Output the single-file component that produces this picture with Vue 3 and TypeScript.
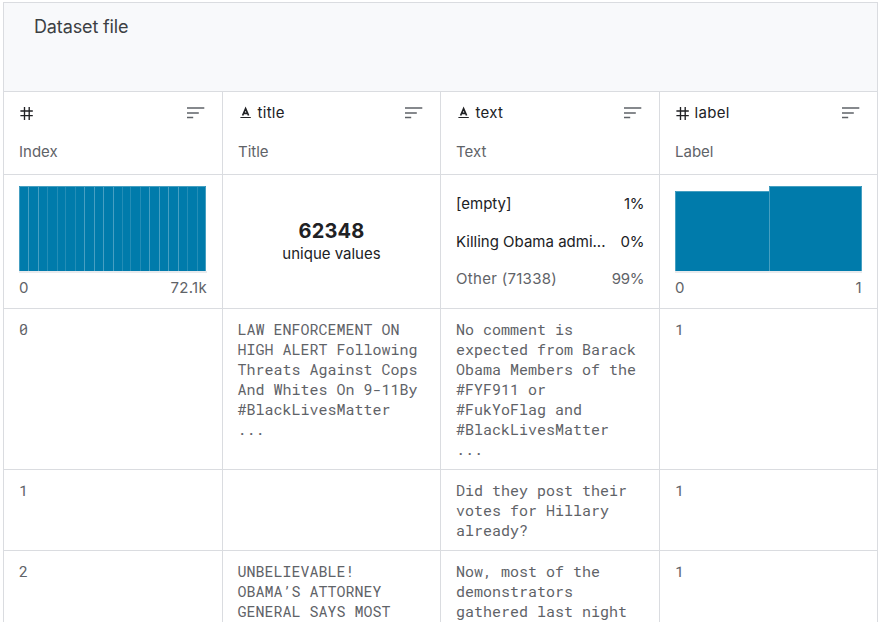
<script setup lang="ts">
type ColumnKind = 'number' | 'string'

interface Column {
  name: string
  kind: ColumnKind
  description: string
}

interface Share {
  label: string
  percent: string
  muted?: boolean
}

const columns: Column[] = [
  { name: '', kind: 'number', description: 'Index' },
  { name: 'title', kind: 'string', description: 'Title' },
  { name: 'text', kind: 'string', description: 'Text' },
  { name: 'label', kind: 'number', description: 'Label' },
]

const shares: Share[] = [
  { label: '[empty]', percent: '1%' },
  { label: 'Killing Obama admi...', percent: '0%' },
  { label: 'Other (71338)', percent: '99%', muted: true },
]

// Left edges of the bins, in chart pixels
const indexBins: number[] = [0, 9, 19, 28, 38, 46, 56, 65, 75, 84, 94, 103, 111, 121, 130, 140, 149, 159, 168, 178]
const strongEdges: number[] = [9, 19, 65, 75, 84, 94, 130, 140, 149, 159]

const rows: string[][] = [
  [
    '0',
    'LAW ENFORCEMENT ON\nHIGH ALERT Following\nThreats Against Cops\nAnd Whites On 9-11By\n#BlackLivesMatter\n...',
    'No comment is\nexpected from Barack\nObama Members of the\n#FYF911 or\n#FukYoFlag and\n#BlackLivesMatter\n...',
    '1',
  ],
  ['1', '', 'Did they post their\nvotes for Hillary\nalready?', '1'],
  [
    '2',
    'UNBELIEVABLE!\nOBAMA’S ATTORNEY\nGENERAL SAYS MOST',
    'Now, most of the\ndemonstrators\ngathered last night',
    '1',
  ],
]
</script>

<template>
  <main class="viewer">
    <header class="banner">Dataset file</header>

    <div class="grid-row heads">
      <section v-for="column in columns" :key="column.description" class="cell head">
        <div class="head-line">
          <svg v-if="column.kind === 'number'" class="kind" width="15" height="16" viewBox="0 0 15 16">
            <path d="M5.5 2V15M10.2 2V15M1.4 6H13.8M1.4 10.6H13.8" fill="none" stroke="#202124" stroke-width="1.35" />
          </svg>
          <svg v-else class="kind" width="15" height="16" viewBox="0 0 15 16">
            <path d="M4.6 10.5L7.6 3.6L10.6 10.5M5.7 8.3H9.5" fill="none" stroke="#202124" stroke-width="1.7" />
            <path d="M2.4 12.5H12.8" stroke="#202124" stroke-width="1" />
          </svg>
          <span class="name">{{ column.name }}</span>
          <svg class="sort" width="18" height="12" viewBox="0 0 18 12">
            <path d="M0 1H17.3M0 6H11.8M0 10.5H6.2" stroke="#5f6368" stroke-width="1.7" />
          </svg>
        </div>
        <p class="description">{{ column.description }}</p>
      </section>
    </div>

    <div class="grid-row summary">
      <section class="cell chart">
        <svg width="188" height="87" viewBox="0 0 188 87">
          <path d="M0 86H188" stroke="#e8eaed" stroke-width="2" />
          <rect width="187" height="85" fill="#007bab" />
          <path
            v-for="x in indexBins.slice(1)"
            :key="x"
            :d="`M${x + 0.5} 0V85`"
            stroke="#ffffff"
            :stroke-opacity="strongEdges.includes(x) ? 0.28 : 0.14"
          />
          <path d="M.5 85V.5H186.5V85" fill="none" stroke="#459fc1" />
        </svg>
        <div class="range"><span>0</span><span>72.1k</span></div>
      </section>
      <section class="cell unique">
        <strong>62348</strong>
        <span>unique values</span>
      </section>
      <section class="cell shares">
        <div v-for="share in shares" :key="share.label" class="share" :class="{ muted: share.muted }">
          <span>{{ share.label }}</span>
          <span class="percent">{{ share.percent }}</span>
        </div>
      </section>
      <section class="cell chart">
        <svg width="188" height="87" viewBox="0 0 188 87">
          <path d="M0 86H187" stroke="#e8eaed" stroke-width="2" />
          <path d="M0 85V5H94V0H187V85Z" fill="#007bab" />
          <path d="M.5 85V5.5H94.5M94.5 85V.5H186.5V85" fill="none" stroke="#459fc1" />
        </svg>
        <div class="range"><span>0</span><span>1</span></div>
      </section>
    </div>

    <div v-for="row in rows" :key="row[0]" class="grid-row">
      <div v-for="(value, i) in row" :key="i" class="cell value">{{ value }}</div>
    </div>
  </main>
</template>

<style>
body {
  background: #fff;
  overflow: hidden;
}
</style>

<style scoped>
.viewer {
  box-sizing: border-box;
  width: 875px;
  height: 620px;
  margin: 2px 0 0 3px;
  overflow: hidden;
  border-top: 1px solid #dadce0;
  border-left: 1px solid #dadce0;
  font-family: Inter, "Liberation Sans", sans-serif;
  font-size: 15px;
  line-height: 20px;
  color: #202124;
}

.banner {
  box-sizing: border-box;
  height: 89px;
  padding: 12px 30px;
  border-right: 1px solid #dadce0;
  border-bottom: 1px solid #dadce0;
  background: #f8f9fb;
  color: #3c4043;
  font-size: 18px;
  letter-spacing: -0.13px;
  line-height: 24px;
}

.grid-row {
  display: grid;
  grid-template-columns: 219px 218px 219px 218px;
}

.cell {
  box-sizing: border-box;
  min-width: 0;
  padding: 11px 15px 9px;
  border-right: 1px solid #dadce0;
  border-bottom: 1px solid #dadce0;
}

.heads {
  height: 83px;
}

.head-line {
  display: flex;
  align-items: center;
  height: 20px;
}

.kind {
  margin-right: 4.5px;
}

.name {
  font-weight: 400;
  letter-spacing: 0.3px;
}

.sort {
  margin-left: auto;
  margin-right: 2px;
}

.description {
  margin: 19px 0 0;
  color: #5f6368;
}

.summary {
  height: 134px;
}

.chart {
  padding-right: 14px;
}

.chart svg {
  display: block;
}

.range {
  display: flex;
  justify-content: space-between;
  margin-top: 5px;
  padding-right: 1px;
  color: #5f6368;
  letter-spacing: 0.3px;
}

.unique {
  display: flex;
  flex-direction: column;
  align-items: center;
  padding-top: 44px;
}

.unique strong {
  margin-bottom: 1px;
  font-size: 20px;
  font-weight: 700;
  letter-spacing: 0.2px;
  line-height: 24px;
}

.shares {
  display: flex;
  flex-direction: column;
  gap: 17.5px;
  padding-top: 19px;
}

.share {
  display: flex;
  justify-content: space-between;
  white-space: nowrap;
}

.percent {
  letter-spacing: -0.4px;
}

.muted {
  color: #5f6368;
  letter-spacing: 0.3px;
}

.value {
  padding: 10px 14px 10px 15px;
  color: #5f6368;
  font-family: "Roboto Mono", "DejaVu Sans Mono", monospace;
  font-size: 15px;
  white-space: pre-line;
}

.value:nth-child(2) {
  padding-left: 14.5px;
}
</style>
